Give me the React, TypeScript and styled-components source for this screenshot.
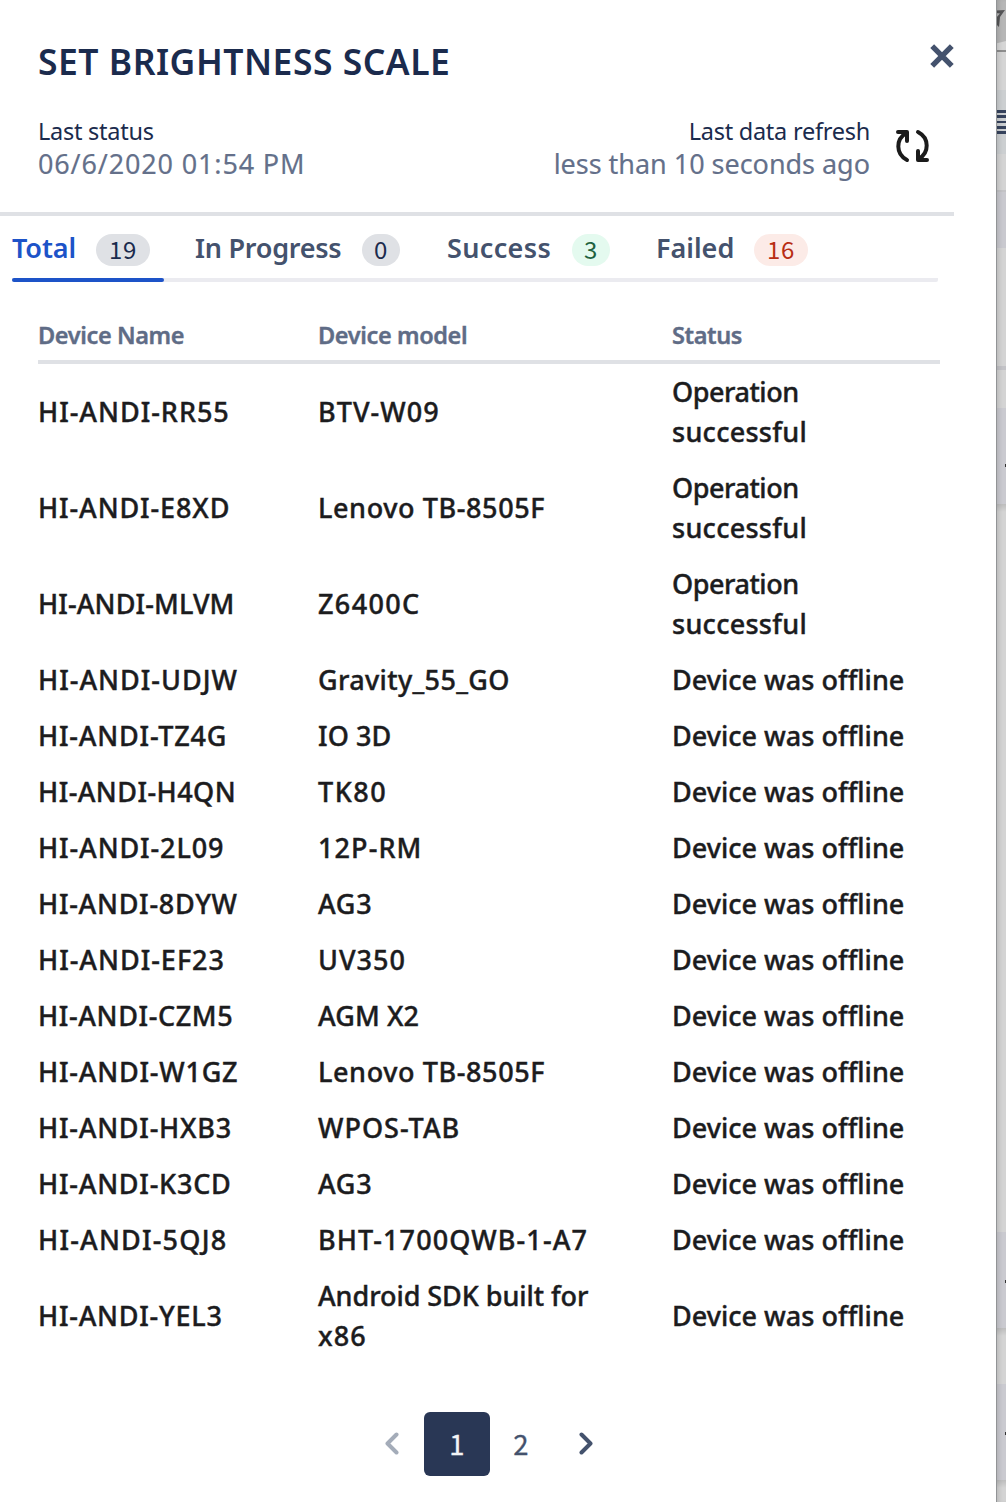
import React from 'react';
import styled, { createGlobalStyle, css } from 'styled-components';

const GlobalStyle = createGlobalStyle`
  *, *::before, *::after { box-sizing: border-box; }
  body {
    margin: 0;
    background: #fff;
    font-family: "Noto Sans", "Open Sans", sans-serif;
    -webkit-font-smoothing: antialiased;
  }
`;

const Screen = styled.div`
  display: grid;
  grid-template-columns: 996px 10px;
  width: 1006px;
  height: 1502px;
  overflow: hidden;
`;

const Panel = styled.main`
  display: flex;
  flex-direction: column;
  background: #fff;
`;

const Header = styled.header`
  display: flex;
  flex-direction: column;
  width: 954px;
  height: 216px;
  border-bottom: 4px solid #dfe1e5;
`;

const TitleBar = styled.div`
  display: flex;
  justify-content: space-between;
  padding: 36px 0 0 38px;
  height: 115px;
`;

const Title = styled.h1`
  margin: 0;
  color: #1b2b4d;
  font-size: 35.5px;
  font-weight: 600;
  line-height: 51px;
  letter-spacing: 0.5px;
`;

const IconButton = styled.button`
  display: flex;
  padding: 0;
  border: 0;
  background: none;
`;

const CloseButton = styled(IconButton)`
  width: 24px;
  height: 24px;
  margin-top: 8px;
`;

const Meta = styled.div`
  display: flex;
  justify-content: space-between;
  padding: 0 23px 0 38px;
`;

const MetaBlock = styled.div<{ $end?: boolean }>`
  text-align: ${(p) => (p.$end ? 'right' : 'left')};
`;

const MetaLabel = styled.div`
  height: 32px;
  color: #1b2b4d;
  font-size: 23.5px;
  line-height: 32px;
  letter-spacing: -0.25px;
`;

const MetaValue = styled.div<{ $track: number }>`
  height: 32px;
  color: #64708a;
  font-size: 27px;
  line-height: 34px;
  letter-spacing: ${(p) => p.$track}px;
  -webkit-text-stroke: 0.15px currentColor;
`;

const Refresh = styled.div`
  display: flex;
  gap: 23px;
`;

const RefreshButton = styled(IconButton)`
  width: 38px;
  height: 38px;
  margin-top: 12px;
`;

const Tabs = styled.nav`
  display: flex;
  width: 926px;
  height: 66px;
  margin-left: 12px;
  border-radius: 2px;
  background: linear-gradient(#ebebf0, #ebebf0) bottom / 100% 4px no-repeat;
`;

const Tab = styled.button<{ $active?: boolean; $width: number; $inset?: number }>`
  display: flex;
  align-items: flex-start;
  justify-content: space-between;
  width: ${(p) => p.$width}px;
  padding: 18px 14px 0 ${(p) => p.$inset ?? 0}px;
  border: 0;
  background: none;
  color: ${(p) => (p.$active ? '#1d53c8' : '#44526d')};
  font-family: inherit;
  position: relative;
  ${(p) =>
    p.$active &&
    css`
      &::after {
        content: '';
        position: absolute;
        left: 0;
        right: 0;
        bottom: 0;
        height: 4px;
        border-radius: 2px;
        background: #1d53c8;
      }
    `}
`;

const TabLabel = styled.span<{ $track: number }>`
  font-size: 27px;
  font-weight: 600;
  line-height: 28px;
  letter-spacing: ${(p) => p.$track}px;
`;

const badgeTones = {
  neutral: css`background: #dfe1e5; color: #1b2b4d;`,
  success: css`background: #e4faef; color: #20623f;`,
  danger: css`background: #fcebe7; color: #b82d14;`,
};

const Badge = styled.span<{ $tone: keyof typeof badgeTones; $wide?: boolean }>`
  width: ${(p) => (p.$wide ? 54 : 38)}px;
  height: 32px;
  border-radius: 16px;
  text-align: center;
  font-family: "Noto Sans CJK JP", "Noto Sans", sans-serif;
  font-size: 24px;
  line-height: 30px;
  letter-spacing: 0.6px;
  ${(p) => badgeTones[p.$tone]}
`;

const Table = styled.table`
  width: 902px;
  margin: 26px 0 0 38px;
  border-collapse: separate;
  border-spacing: 0;
  table-layout: fixed;
`;

const HeadCell = styled.th<{ $width: number }>`
  width: ${(p) => p.$width}px;
  height: 56px;
  padding: 1px 0 0;
  border-bottom: 4px solid #dfe1e5;
  color: #5f6c86;
  text-align: left;
  font-size: 23.5px;
  font-weight: 600;
  line-height: 32px;
  letter-spacing: -0.38px;
  -webkit-text-stroke: 0.4px currentColor;
`;

const Cell = styled.td`
  padding: 8px 0;
  color: #1c1c1e;
  font-size: 27px;
  font-weight: 500;
  line-height: 40px;
  vertical-align: middle;
  -webkit-text-stroke: 0.4px currentColor;
`;

const Line = styled.span<{ $track: number }>`
  display: block;
  height: 40px;
  letter-spacing: ${(p) => p.$track}px;
`;

const Pagination = styled.nav`
  display: flex;
  align-items: center;
  margin: 48px 0 0 384px;
  height: 64px;
`;

const Page = styled.button<{ $current?: boolean }>`
  width: ${(p) => (p.$current ? 66 : 62)}px;
  height: 64px;
  padding: 0 0 2px;
  border: 0;
  border-radius: 6px;
  background: ${(p) => (p.$current ? '#293755' : 'transparent')};
  color: ${(p) => (p.$current ? '#f3f4f6' : '#44526d')};
  font-family: "Noto Sans CJK JP", "Noto Sans", sans-serif;
  font-size: 27.5px;
  line-height: 62px;
  -webkit-text-stroke: 0.3px currentColor;
`;

const Arrow = styled(IconButton)<{ $side: 'prev' | 'next' }>`
  width: 16px;
  ${(p) => (p.$side === 'prev' ? 'margin-right: 24px' : 'margin-left: 26px')};
`;

const Backdrop = styled.aside`
  display: flex;
  flex-direction: column;
  overflow: hidden;
  box-shadow: inset 1px 0 0 #929496, inset 5px 0 4px -2px rgba(0, 0, 0, 0.13);
`;

const Band = styled.div<{ $h: number; $color: string; $shade?: boolean }>`
  display: flex;
  flex: none;
  align-items: center;
  justify-content: flex-end;
  height: ${(p) => p.$h}px;
  position: relative;
  z-index: -1;
  background: ${(p) =>
    p.$shade
      ? `linear-gradient(rgba(0,0,0,.11), rgba(0,0,0,0) 8px), ${p.$color}`
      : p.$color};
`;

const Dot = styled.i<{ $drop: number }>`
  width: 1px;
  height: 3px;
  margin-top: ${(p) => p.$drop}px;
  background: #333;
`;

type TextLine = [text: string, track: number];
type Device = { name: TextLine; model: TextLine[]; ok?: boolean };

const devices: Device[] = [
  { name: ['HI-ANDI-RR55', 0.98], model: [['BTV-W09', 1.05]], ok: true },
  { name: ['HI-ANDI-E8XD', 0.88], model: [['Lenovo TB-8505F', 0.6]], ok: true },
  { name: ['HI-ANDI-MLVM', 0.12], model: [['Z6400C', 1.35]], ok: true },
  { name: ['HI-ANDI-UDJW', 1.0], model: [['Gravity_55_GO', 0.35]] },
  { name: ['HI-ANDI-TZ4G', 0.8], model: [['IO 3D', 0.1]] },
  { name: ['HI-ANDI-H4QN', 0.44], model: [['TK80', 1.5]] },
  { name: ['HI-ANDI-2L09', 0.88], model: [['12P-RM', 1.1]] },
  { name: ['HI-ANDI-8DYW', 0.72], model: [['AG3', 0.7]] },
  { name: ['HI-ANDI-EF23', 0.98], model: [['UV350', 1]] },
  { name: ['HI-ANDI-CZM5', 0.62], model: [['AGM X2', 0.1]] },
  { name: ['HI-ANDI-W1GZ', 0.78], model: [['Lenovo TB-8505F', 0.6]] },
  { name: ['HI-ANDI-HXB3', 0.76], model: [['WPOS-TAB', 1.02]] },
  { name: ['HI-ANDI-K3CD', 0.76], model: [['AG3', 0.7]] },
  { name: ['HI-ANDI-5QJ8', 1.2], model: [['BHT-1700QWB-1-A7', 1.11]] },
  { name: ['HI-ANDI-YEL3', 0.74], model: [['Android SDK built for', -0.06], ['x86', 1.1]] },
];

const succeeded: TextLine[] = [['Operation', -0.45], ['successful', 0.28]];
const offline: TextLine[] = [['Device was offline', 0.01]];

const Lines = ({ lines }: { lines: TextLine[] }) => (
  <>
    {lines.map(([text, track]) => (
      <Line key={text} $track={track}>{text}</Line>
    ))}
  </>
);

const CloseIcon = () => (
  <svg width="24" height="24" viewBox="0 0 24 24" fill="none" stroke="#44526d" strokeWidth="5.4">
    <path d="M2.2 2.2 21.8 21.8M21.8 2.2 2.2 21.8" />
  </svg>
);

const RefreshIcon = () => (
  <svg width="38" height="38" viewBox="0 0 38 38" fill="none" stroke="#1b1b1b" strokeWidth="4" strokeLinecap="round" strokeLinejoin="round">
    <path d="M5 5H14V14M13.5 6C2.500 12 2.500 27 14 33" />
    <path d="M34 33H25V24M25.5 32C36.500 26 36.500 11 25 5" />
  </svg>
);

const Chevron = ({ next }: { next?: boolean }) => (
  <svg width="16" height="24" viewBox="0 0 16 24" fill="none" stroke={next ? '#44526d' : '#a4acb9'} strokeWidth="4" strokeLinecap="round" strokeLinejoin="round">
    <path d={next ? 'M3.5 2.5 12.5 11.5 3.5 20.5' : 'M12.5 2.5 3.5 11.5 12.5 20.5'} />
  </svg>
);

const StarEdge = () => (
  <svg width="10" height="50" viewBox="0 0 10 50">
    <path d="M0 43.500 10 41V50H0Z" fill="#d6d6d6" />
    <path d="M0 10.500 9 10 4 17 3 27 0 24V18L4 13.500 0 13Z" fill="#555557" />
  </svg>
);

const ListEdge = () => (
  <svg width="10" height="64" viewBox="0 0 10 64" fill="#36435d">
    <path d="M0 20h10v3H0zM0 25h10v3H1v3h9v2H0zM0 36h10v3H0zM0 41h10v3H0z" />
  </svg>
);

export default function App() {
  return (
    <>
      <GlobalStyle />
      <Screen>
        <Panel>
          <Header>
            <TitleBar>
              <Title>SET BRIGHTNESS SCALE</Title>
              <CloseButton aria-label="Close"><CloseIcon /></CloseButton>
            </TitleBar>
            <Meta>
              <MetaBlock>
                <MetaLabel>Last status</MetaLabel>
                <MetaValue $track={0.85}>06/6/2020 01:54 PM</MetaValue>
              </MetaBlock>
              <Refresh>
                <MetaBlock $end>
                  <MetaLabel>Last data refresh</MetaLabel>
                  <MetaValue $track={-0.03}>less than 10 seconds ago</MetaValue>
                </MetaBlock>
                <RefreshButton aria-label="Refresh"><RefreshIcon /></RefreshButton>
              </Refresh>
            </Meta>
          </Header>

          <Tabs>
            <Tab $active $width={152}>
              <TabLabel $track={-0.1}>Total</TabLabel>
              <Badge $tone="neutral" $wide>19</Badge>
            </Tab>
            <Tab $width={250} $inset={31}>
              <TabLabel $track={-0.25}>In Progress</TabLabel>
              <Badge $tone="neutral">0</Badge>
            </Tab>
            <Tab $width={210} $inset={33}>
              <TabLabel $track={0.35}>Success</TabLabel>
              <Badge $tone="success">3</Badge>
            </Tab>
            <Tab $width={198} $inset={32}>
              <TabLabel $track={0}>Failed</TabLabel>
              <Badge $tone="danger" $wide>16</Badge>
            </Tab>
          </Tabs>

          <Table>
            <thead>
              <tr>
                <HeadCell $width={280}>Device Name</HeadCell>
                <HeadCell $width={354}>Device model</HeadCell>
                <HeadCell $width={268}>Status</HeadCell>
              </tr>
            </thead>
            <tbody>
              {devices.map((d) => (
                <tr key={d.name[0]}>
                  <Cell><Lines lines={[d.name]} /></Cell>
                  <Cell><Lines lines={d.model} /></Cell>
                  <Cell><Lines lines={d.ok ? succeeded : offline} /></Cell>
                </tr>
              ))}
            </tbody>
          </Table>

          <Pagination>
            <Arrow $side="prev" aria-label="Previous"><Chevron /></Arrow>
            <Page $current>1</Page>
            <Page>2</Page>
            <Arrow $side="next" aria-label="Next"><Chevron next /></Arrow>
          </Pagination>
        </Panel>

        <Backdrop>
          <Band $h={50} $color="#b6b6b6"><StarEdge /></Band>
          <Band $h={2} $color="#8d8d8d" />
          <Band $h={38} $color="#d5d5d5" />
          <Band $h={64} $color="#cccfd1"><ListEdge /></Band>
          <Band $h={36} $color="#d4d4d4" />
          <Band $h={2} $color="#c3c3c6" />
          <Band $h={56} $color="#c9c9cf" />
          <Band $h={118} $color="#d4d4d4" />
          <Band $h={4} $color="#c3c3c7" />
          <Band $h={38} $color="#d4d4d4" />
          <Band $h={96} $color="#cacad0"><Dot $drop={19} /></Band>
          <Band $h={728} $color="#d4d4d4" $shade />
          <Band $h={96} $color="#cacad0"><Dot $drop={2} /></Band>
          <Band $h={56} $color="#d4d4d4" $shade />
          <Band $h={96} $color="#cacad0"><Dot $drop={2} /></Band>
          <Band $h={22} $color="#d4d4d4" $shade />
        </Backdrop>
      </Screen>
    </>
  );
}
